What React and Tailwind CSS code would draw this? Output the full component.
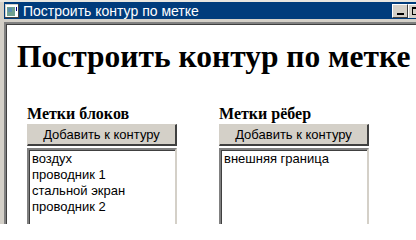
export default function App() {
  const sans = { fontFamily: '"Liberation Sans", Arial, sans-serif' };
  const serif = { fontFamily: '"Liberation Serif", "Times New Roman", serif' };
  const Column = ({ title, items }) => (
    <div className="flex flex-col w-[150px]">
      <div className="text-[16px] font-bold leading-[18px] text-black" style={serif}>{title}</div>
      <button
        className="mt-[1px] h-[22px] w-[150px] bg-[#d4d0c8] text-[13px] text-black border-t border-l border-t-[#d4d0c8] border-l-[#d4d0c8] border-r-2 border-b-2 border-r-[#404040] border-b-[#404040] leading-none"
        style={sans}
      >
        Добавить к контуру
      </button>
      <div className="mt-[2px] h-[90px] w-[150px] border-2 border-t-[#808080] border-l-[#808080] border-r-[#d4d0c8] border-b-[#d4d0c8] bg-white">
        <div className="h-full border-t border-l border-[#404040] px-[2px] pt-0 text-[13px] leading-[16px] text-black" style={sans}>
          {items.map((t) => (
            <div key={t}>{t}</div>
          ))}
        </div>
      </div>
    </div>
  );
  return (
    <div className="w-[416px] h-[224px] overflow-hidden bg-[#d4d0c8]">
      <div className="w-[436px] h-[224px] flex flex-col border-t-2 border-t-[#e8e6e0] pl-[4px]">
        <div className="h-[17px] bg-[#003c7c] flex items-center pl-[1px] pr-[4px] shrink-0">
          <svg width="14" height="14" viewBox="0 0 14 14" className="shrink-0">
            <rect x="0" y="0" width="14" height="14" fill="#d4d0c8" />
            <rect x="1" y="1" width="12" height="12" fill="#ffffff" />
            <rect x="2" y="3" width="8" height="9" fill="#6fa090" />
            <rect x="3" y="4" width="4" height="4" fill="#5a8fb0" />
            <rect x="11" y="3" width="1" height="4" fill="#000080" />
            <rect x="0" y="13" width="14" height="1" fill="#404040" />
            <rect x="13" y="0" width="1" height="14" fill="#404040" />
          </svg>
          <span className="ml-[4px] text-white text-[14px] leading-none whitespace-nowrap" style={sans}>
            Построить контур по метке
          </span>
          <div className="ml-auto flex mr-[8px]">
            <div className="w-[16px] h-[14px] bg-[#d4d0c8] border-t border-l border-white border-r border-b border-r-[#404040] border-b-[#404040] flex items-end justify-center pb-[2px]">
              <div className="w-[7px] h-[2px] bg-black" />
            </div>
            <div className="w-[16px] h-[14px] bg-[#d4d0c8] border-t border-l border-white flex items-center justify-center">
              <div className="w-[9px] h-[8px] border border-black border-t-2" />
            </div>
          </div>
        </div>
        <div className="mt-[3px] flex-1 border-t-2 border-l-2 border-t-[#808080] border-l-[#808080]">
          <div className="h-full border-t border-l border-[#404040] bg-white pl-[10px] pt-[14px]">
            <div className="text-[31.5px] font-bold leading-[36px] text-black whitespace-nowrap" style={serif}>
              Построить контур по метке
            </div>
            <div className="mt-[30px] pl-[10px] flex gap-[42px]">
              <Column title="Метки блоков" items={["воздух", "проводник 1", "стальной экран", "проводник 2"]} />
              <Column title="Метки рёбер" items={["внешняя граница"]} />
            </div>
          </div>
        </div>
      </div>
    </div>
  );
}
